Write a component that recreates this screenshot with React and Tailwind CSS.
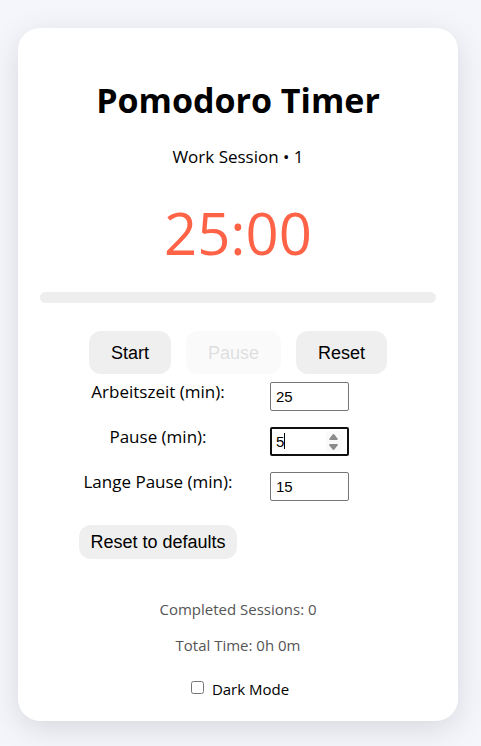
import { useState } from "react";

const actionClass =
  "h-[43px] rounded-xl bg-[#efefef] px-[22px] font-['Liberation_Sans',Arial,sans-serif] text-[18px] leading-6 text-black disabled:text-black/40 disabled:opacity-30";

function Spinner({ onStep }) {
  return (
    <div className="absolute inset-y-1 right-2 flex w-[15px] flex-col items-center justify-center gap-1 bg-[#fafafa]">
      <button type="button" tabIndex={-1} aria-label="Increase" onClick={() => onStep(1)}>
        <svg width="9" height="6" viewBox="0 0 9 6" className="block fill-[#8b8b8b]">
          <path d="M3.6 .5Q4.5-.4 5.4 .5L8.7 4.8Q9 6 8 6H1Q0 6 .3 4.8Z" />
        </svg>
      </button>
      <button type="button" tabIndex={-1} aria-label="Decrease" onClick={() => onStep(-1)}>
        <svg width="9" height="6" viewBox="0 0 9 6" className="block fill-[#8b8b8b]">
          <path d="M3.6 5.5Q4.5 6.4 5.4 5.5L8.7 1.2Q9 0 8 0H1Q0 0 .3 1.2Z" />
        </svg>
      </button>
    </div>
  );
}

function MinutesField({ id, label, value, onChange, focused, onFocus }) {
  return (
    <>
      <label htmlFor={id} className="h-[29px] text-center text-[17px] leading-5">
        {label}
      </label>
      <div className="relative w-[79px]">
        <input
          id={id}
          type="number"
          min="1"
          value={value}
          autoFocus={focused}
          onFocus={onFocus}
          onChange={(e) => onChange(Number(e.target.value))}
          className="block h-[29px] w-full appearance-none rounded-[2px] border border-[#767676] bg-white px-[5px] font-['Liberation_Sans',Arial,sans-serif] text-[15px] text-black caret-transparent outline-none [appearance:textfield] focus:border-2 focus:border-[#101010] focus:px-1"
        />
        {focused && (
          <>
            <div className="pointer-events-none absolute inset-y-[6px] left-[6px] flex font-['Liberation_Sans',Arial,sans-serif] text-[15px]">
              <span className="invisible">{value}</span>
              <span className="h-4 w-px bg-black" />
            </div>
            <Spinner onStep={(step) => onChange(Math.max(1, value + step))} />
          </>
        )}
      </div>
    </>
  );
}

export default function App() {
  const [work, setWork] = useState(25);
  const [pause, setPause] = useState(5);
  const [longPause, setLongPause] = useState(15);
  const [active, setActive] = useState("pause");
  const [dark, setDark] = useState(false);

  const reset = () => {
    setWork(25);
    setPause(5);
    setLongPause(15);
  };

  return (
    <div className="min-h-screen bg-[#f4f6fb] pt-7 pr-[23px] pb-[25px] pl-[18px] font-['Segoe_UI','Open_Sans',sans-serif] text-black">
      <main className="mx-auto max-w-[440px] rounded-[22px] bg-white px-[22px] pt-12 pb-[22px] text-center shadow-[0_8px_32px_rgba(0,0,0,0.12)]">
        <h1 className="text-[34px] leading-12 font-bold">Pomodoro Timer</h1>
        <p className="mt-[21px] text-[17px] leading-6">Work Session • 1</p>
        <div className="mt-6 text-[58px] leading-20 text-[#ff6347]">25:00</div>
        <div className="mt-[19px] h-[11px] rounded-full bg-[#eee]" />
        <div className="mt-7 flex justify-center gap-[15px]">
          <button type="button" className={actionClass}>Start</button>
          <button type="button" disabled className={actionClass}>Pause</button>
          <button type="button" className={actionClass}>Reset</button>
        </div>
        <div className="mx-[39px] mt-2 grid grid-cols-[158px_1fr] gap-x-[33px] gap-y-4">
          <MinutesField id="work" label="Arbeitszeit (min):" value={work} onChange={setWork} focused={active === "work"} onFocus={() => setActive("work")} />
          <MinutesField id="pause" label="Pause (min):" value={pause} onChange={setPause} focused={active === "pause"} onFocus={() => setActive("pause")} />
          <MinutesField id="long" label="Lange Pause (min):" value={longPause} onChange={setLongPause} focused={active === "long"} onFocus={() => setActive("long")} />
        </div>
        <div className="mx-[39px] mt-6 flex">
          <button
            type="button"
            onClick={reset}
            className="h-[34px] w-[158px] rounded-xl bg-[#efefef] font-['Liberation_Sans',Arial,sans-serif] text-[18px] leading-6 whitespace-nowrap"
          >
            Reset to defaults
          </button>
        </div>
        <div className="mt-10 text-[15px] leading-5 text-[#555]">
          <p>Completed Sessions: 0</p>
          <p className="mt-4">Total Time: 0h 0m</p>
        </div>
        <label className="mt-6 flex items-center justify-center gap-2 pl-1 text-[15px] leading-5">
          <input
            type="checkbox"
            checked={dark}
            onChange={(e) => setDark(e.target.checked)}
            className="mb-1 size-[13px]"
          />
          Dark Mode
        </label>
      </main>
    </div>
  );
}
